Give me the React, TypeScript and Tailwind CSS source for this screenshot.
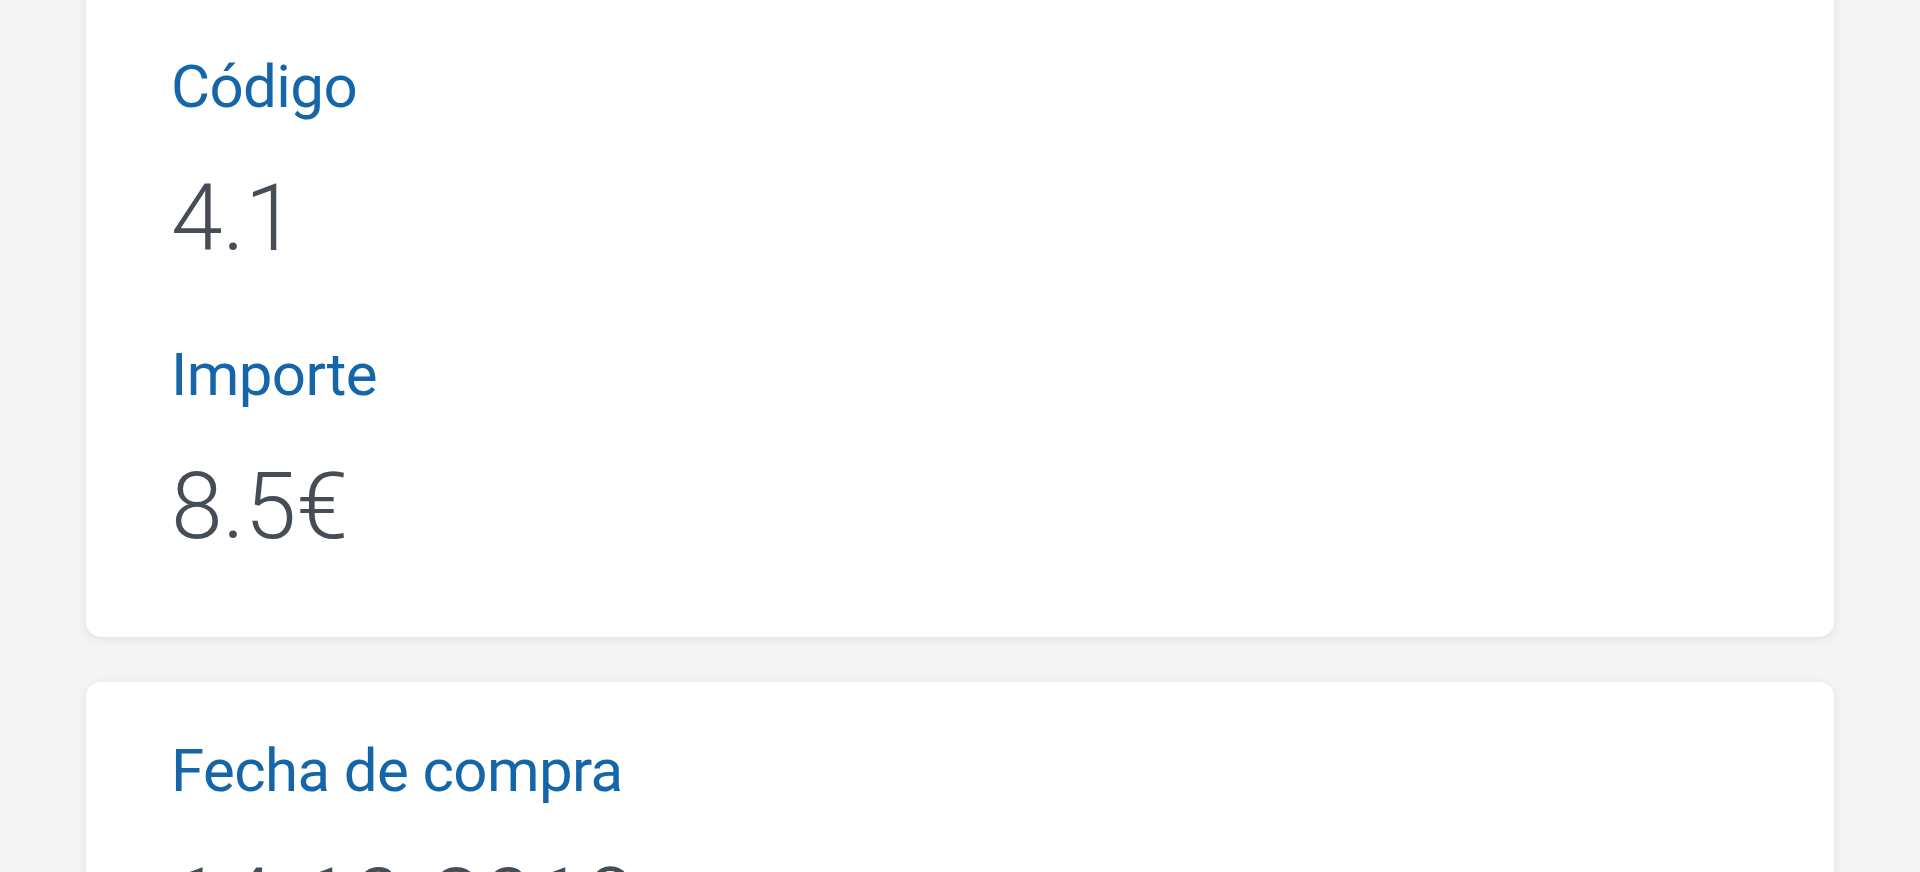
type Field = {
  label: string;
  value: string;
};

const groups: Field[][] = [
  [
    { label: "Código", value: "4.1" },
    { label: "Importe", value: "8.5€" },
  ],
  [
    { label: "Fecha de compra", value: "14-10-2019" },
    { label: "Estado", value: "Pagado" },
  ],
];

function InfoCard({ fields, first }: { fields: Field[]; first: boolean }) {
  return (
    <div
      className={
        first
          ? "bg-white rounded-[15px] shadow-[0_2px_10px_rgba(0,0,0,0.08)] px-[85px] pt-[92px] pb-[84px] -mt-[40px]"
          : "bg-white rounded-[15px] shadow-[0_2px_10px_rgba(0,0,0,0.08)] px-[85px] pt-[54px] pb-[84px]"
      }
    >
      <div className="flex flex-col gap-[75px]">
        {fields.map((f) => (
          <div key={f.label} className="flex flex-col gap-[50px]">
            <div className="text-[60px] leading-[70px] font-normal tracking-[-0.6px] text-[#1466a8]">
              {f.label}
            </div>
            <div className="text-[93px] leading-[93px] font-light text-[#474d56]">{f.value}</div>
          </div>
        ))}
      </div>
    </div>
  );
}

export default function App() {
  return (
    <div
      className="h-[872px] overflow-hidden bg-[#f4f4f4] px-[86px]"
      style={{ fontFamily: "Roboto, 'Noto Sans', sans-serif" }}
    >
      <div className="flex flex-col gap-[45px]">
        {groups.map((g, i) => (
          <InfoCard key={i} fields={g} first={i === 0} />
        ))}
      </div>
    </div>
  );
}
